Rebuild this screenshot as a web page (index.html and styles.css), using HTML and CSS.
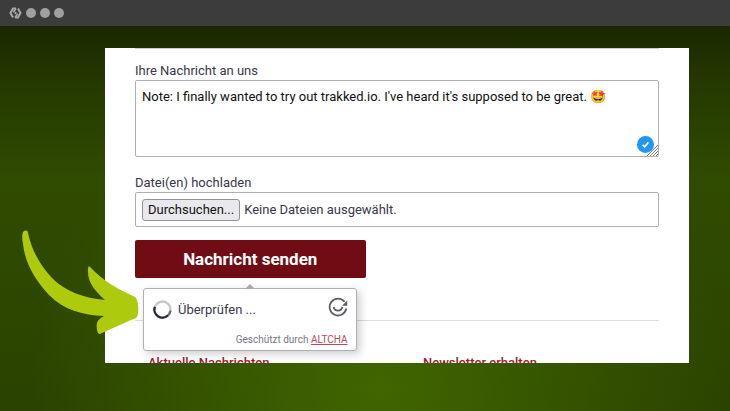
FILE: index.html
```html
<!DOCTYPE html>
<html lang="de">
<head>
    <meta charset="UTF-8">
    <meta name="viewport" content="width=device-width, initial-scale=1.0">
    <title>Kontaktformular</title>
    <link rel="stylesheet" href="styles.css">
</head>
<body>
    <header class="titlebar">
        <svg class="logo" viewBox="0 0 12 12" aria-hidden="true">
            <path d="M6.500 1.500H3.500L1 6l2.500 4.500M5.500 10.500h3L11 6 8.500 1.500" fill="none" stroke="#a8a8a8" stroke-width="2"/>
            <path d="M6.500 1.500 3.800 5.200M5.500 10.500 8.200 6.800" stroke="#a8a8a8" stroke-width="1.600"/>
            <path d="M6 4.600 7.400 6 6 7.400 4.600 6z" fill="#a8a8a8"/>
        </svg>
        <span class="dot"></span>
        <span class="dot"></span>
        <span class="dot"></span>
    </header>

    <main class="stage">
        <div class="panel">
            <form class="form">
                <div class="field">
                    <label class="label" for="message">Ihre Nachricht an uns</label>
                    <div class="message">
                        <textarea class="textarea" id="message" spellcheck="false">Note: I finally wanted to try out trakked.io. I've heard it's supposed to be great. 🤩</textarea>
                        <svg class="check" viewBox="0 0 16 16" aria-hidden="true">
                            <circle cx="8" cy="8" r="8" fill="#2196f3"/>
                            <path d="M5.300 8.300 7.200 10.100 10.700 6" fill="none" stroke="#fff" stroke-width="1.500"/>
                        </svg>
                        <svg class="grip" viewBox="0 0 11 11" aria-hidden="true">
                            <path d="M0 11 11 0M3 11 11 3M6 11 11 6M9 11 11 9" stroke="#777" stroke-width="1"/>
                        </svg>
                    </div>
                </div>

                <div class="field">
                    <label class="label" for="files">Datei(en) hochladen</label>
                    <div class="upload">
                        <input class="upload-input" type="file" id="files" multiple>
                        <span class="browse">Durchsuchen...</span>
                        <span>Keine Dateien ausgewählt.</span>
                    </div>
                </div>

                <div class="submit">
                    <button class="send" type="submit">Nachricht senden</button>
                    <div class="captcha">
                        <div class="captcha-main">
                            <svg class="spinner" viewBox="0 0 18 18" aria-hidden="true">
                                <circle cx="9" cy="9" r="7.600" fill="none" stroke="#c8c8cb" stroke-width="2.200"/>
                                <path d="M1.800 6.500A7.600 7.600 0 0 0 14.400 14.400" fill="none" stroke="#25253a" stroke-width="2.200"/>
                                <path d="M14.400 14.400A7.600 7.600 0 0 0 16.500 10" fill="none" stroke="#6a6a78" stroke-width="2.200"/>
                            </svg>
                            <span class="status">Überprüfen ...</span>
                            <svg class="altcha" viewBox="0 0 20 20" aria-hidden="true">
                                <path d="M18.300 11.500A8.400 8.400 0 1 1 16.600 4.800" fill="none" stroke="#5c5c68" stroke-width="1.800"/>
                                <path d="M19.200 3.600v5.200h-5.200z" fill="#5c5c68"/>
                                <path d="M5.600 10a4.500 4.500 0 0 0 8.800 0" fill="none" stroke="#5c5c68" stroke-width="1.800"/>
                            </svg>
                        </div>
                        <p class="captcha-footer">Geschützt durch <a href="#">ALTCHA</a></p>
                    </div>
                </div>
            </form>

            <footer class="footer">
                <h2 class="heading">Aktuelle Nachrichten</h2>
                <h2 class="heading">Newsletter erhalten</h2>
            </footer>
        </div>

        <svg class="arrow" viewBox="0 0 118 106" aria-hidden="true">
            <path fill="#aeca0c" d="M1 2C3 0 6 0 6 3 10 21 18 35 30 48 44 62 62 68 83 70 74 62 66 53 66 42 66 38 66 35 68 37 82 52 98 60 113 67 117 70 117 83 115 87 113 89 111 89 109 90L80 103C77 105 76 104 75 100 74 93 75 90 82 86 60 85 42 80 27 65 13 50 3 33 1 14 0 9 0 5 1 2Z"/>
        </svg>
    </main>
</body>
</html>
```

FILE: styles.css
```css
* { box-sizing: border-box; }
body { display: flex; flex-direction: column; height: 100vh; margin: 0; overflow: hidden;
       font-family: Roboto, "Liberation Sans", sans-serif; font-size: 13px; line-height: 16px; color: #38384a; }

.titlebar { display: flex; align-items: center; gap: 4px; height: 26px; padding: 0 9px; background: #3c3c3c; }
.logo { width: 13px; height: 12px; }
.dot { width: 10px; height: 10px; border-radius: 50%; background: #a0a0a0; }

.stage { position: relative; display: flex; flex: 1; min-height: 0; padding: 22px 41px 48px 105px;
         background: radial-gradient(ellipse at 52% 94%, #416500 0%, rgba(65, 101, 0, 0) 65%),
                     linear-gradient(#1b2700 0%, #253900 15%, #304c00 40%, #2a4300 100%); }
.panel { flex: 1; overflow: hidden; padding: 0 30px; background: #fff; }

.form { display: flex; flex-direction: column; gap: 18px; padding-top: 14px; border-top: 1px solid #ccc; }
.field { display: flex; flex-direction: column; gap: 1px; }

.message { position: relative; display: flex; }
.textarea { width: 100%; height: 77px; padding: 8px 6px; border: 1px solid #b0b0b0; border-radius: 2px;
            background: #fff; color: #111; font: inherit; resize: none; }
.check { position: absolute; right: 5px; bottom: 4px; width: 17px; height: 17px; }
.grip { position: absolute; right: 1px; bottom: 1px; width: 11px; height: 11px; }

.upload { position: relative; display: flex; align-items: center; gap: 4px; height: 35px; padding: 0 6px;
          border: 1px solid #b0b0b0; border-radius: 2px; }
.upload-input { position: absolute; inset: 0; width: 100%; opacity: 0; }
.browse { padding: 2px 5px; border: 1px solid #9191a0; border-radius: 3px; background: #e9e9ed; color: #111; }

.submit { position: relative; width: 44%; margin-top: -5px; }
.send { display: block; width: 100%; height: 38px; border: none; border-radius: 2px; background: #700c14;
        color: #fff; font: bold 17px/20px Roboto, "Liberation Sans", sans-serif; }

.captcha { position: absolute; top: 48px; left: 8px; right: 9px; padding: 8px 8px 4px; border: 1px solid #b0b0b0;
           border-radius: 3px; background: #fff; box-shadow: 3px 3px 8px rgba(0, 0, 0, 0.2); }
.captcha::before { content: ""; position: absolute; bottom: 100%; left: 50%; transform: translateX(-50%);
                   border: 5px solid transparent; border-top: none; border-bottom-color: #a8a8a8; }
.captcha-main { display: flex; align-items: flex-start; gap: 5px; }
.spinner { width: 21px; height: 21px; padding: 1px; margin-top: 2px; }
.status { flex: 1; padding-top: 5px; }
.altcha { width: 20px; height: 20px; }
.captcha-footer { margin: 14px 0 0; font-size: 10px; line-height: 12px; text-align: right; color: #777783; }
.captcha-footer a { color: #bd4a54; }

.footer { display: grid; grid-template-columns: 1fr 1fr; gap: 52px; margin-top: 42px; padding: 34px 13px 0;
          border-top: 1px solid #ddd; }
.heading { margin: 0; font-size: 13px; line-height: 16px; font-weight: 500; color: #a5182b; }

.arrow { position: absolute; top: 204px; left: 22px; width: 118px; height: 106px; }
```
